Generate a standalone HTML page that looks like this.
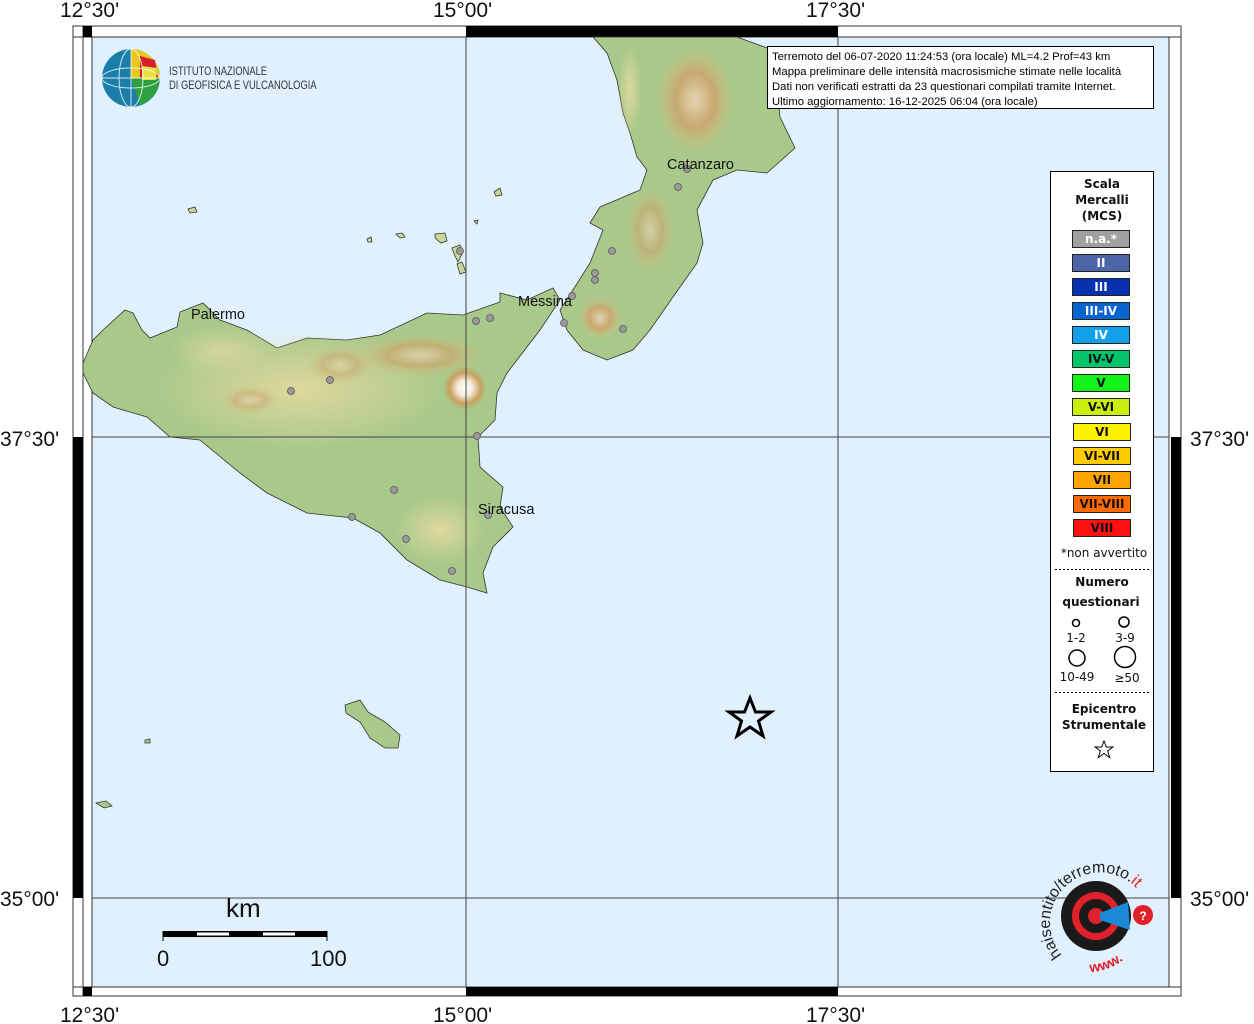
<!DOCTYPE html>
<html><head><meta charset="utf-8"><style>
body{margin:0;background:#fff;width:1254px;height:1024px;overflow:hidden;font-family:"Liberation Sans",sans-serif}
svg{position:absolute;left:0;top:0}
</style></head><body>
<svg width="1254" height="1024" viewBox="0 0 1254 1024" xmlns="http://www.w3.org/2000/svg">
<defs>
<radialGradient id="etna" cx="0.5" cy="0.5" r="0.5"><stop offset="0" stop-color="#fff"/><stop offset="0.35" stop-color="#f3ead8"/><stop offset="0.7" stop-color="#c9a060"/><stop offset="1" stop-color="#c9a060" stop-opacity="0"/></radialGradient>
<radialGradient id="mt" cx="0.5" cy="0.5" r="0.5"><stop offset="0" stop-color="#e8d6b8"/><stop offset="0.5" stop-color="#cba46a"/><stop offset="1" stop-color="#d8c488" stop-opacity="0"/></radialGradient>
<radialGradient id="tan" cx="0.5" cy="0.5" r="0.5"><stop offset="0" stop-color="#e5d9a0"/><stop offset="1" stop-color="#e5d9a0" stop-opacity="0"/></radialGradient>
</defs>
<rect x="73" y="26" width="1108" height="970" fill="#fff" stroke="#333" stroke-width="1"/>
<rect x="92" y="37" width="1077" height="950" fill="#e0f1fd"/>
<line x1="83" y1="26" x2="83" y2="996" stroke="#333"/>
<line x1="73" y1="987" x2="1181" y2="987" stroke="#333"/>
<line x1="73" y1="37" x2="1181" y2="37" stroke="#333"/>
<rect x="92" y="37" width="1077" height="950" fill="none" stroke="#333" stroke-width="1"/>
<rect x="466" y="26" width="372" height="11" fill="#000"/>
<rect x="466" y="987" width="372" height="9" fill="#000"/>
<rect x="83" y="26" width="9" height="11" fill="#000"/>
<rect x="83" y="987" width="9" height="9" fill="#000"/>
<rect x="73" y="437" width="10" height="461" fill="#000"/>
<rect x="1171" y="437" width="10" height="461" fill="#000"/>
<g stroke="#333" stroke-width="0.8">
<path fill="#a8c98a" d="M83,363 L93,340 L103,330 L125,310 L133,313 L142,330 L150,338 L177,327 L180,312 L203,303 L220,320 L247,330 L277,348 L307,338 L347,340 L380,335 L427,313 L463,315 L500,302 L500,293 L527,300 L553,288 L560,300 L540,330 L507,373 L497,393 L495,420 L478,437 L480,467 L503,487 L500,507 L513,527 L493,547 L483,573 L487,593 L467,587 L440,580 L407,560 L380,533 L353,518 L307,513 L267,493 L240,473 L200,440 L170,437 L147,417 L113,407 L93,393 L83,373 Z"/>
<path fill="#a8c98a" d="M593,37 L737,37 L773,50 L780,117 L795,148 L767,173 L737,170 L713,180 L697,210 L703,243 L697,263 L673,297 L650,330 L633,350 L607,360 L583,350 L567,330 L560,310 L573,290 L590,263 L603,230 L590,223 L600,207 L640,190 L647,170 L637,157 L630,133 L623,113 L617,80 L607,53 Z"/>
<path fill="#a8c98a" d="M345,705 L360,700 L368,712 L385,722 L400,735 L398,748 L385,748 L370,738 L360,722 L346,713 Z"/>
<path fill="#a8c98a" d="M96,803 L106,801 L112,806 L104,808 Z"/>
<path fill="#a8c98a" d="M145,740 L150,739 L150,743 L145,743 Z"/>
<path fill="#c9d79a" d="M435,234 L445,233 L447,241 L441,243 L435,238 Z"/>
<path fill="#c9d79a" d="M452,248 L460,245 L463,252 L458,262 L455,256 Z"/>
<path fill="#c9d79a" d="M457,264 L462,262 L466,272 L460,274 Z"/>
<path fill="#c9d79a" d="M396,234 L402,233 L405,237 L400,238 Z"/>
<path fill="#c9d79a" d="M367,239 L371,237 L372,242 L368,242 Z"/>
<path fill="#c9d79a" d="M474,221 L478,220 L477,224 Z"/>
<path fill="#c9d79a" d="M494,192 L500,188 L502,195 L496,196 Z"/>
<path fill="#c9d79a" d="M188,209 L195,207 L197,212 L190,213 Z"/>
</g>
<g>
<ellipse cx="300" cy="390" rx="150" ry="60" fill="url(#tan)" opacity="0.9"/>
<ellipse cx="220" cy="350" rx="50" ry="25" fill="url(#tan)" opacity="0.7"/>
<ellipse cx="420" cy="355" rx="65" ry="22" fill="url(#mt)" opacity="0.7"/>
<ellipse cx="340" cy="365" rx="35" ry="20" fill="url(#mt)" opacity="0.5"/>
<ellipse cx="250" cy="400" rx="30" ry="15" fill="url(#mt)" opacity="0.5"/>
<ellipse cx="440" cy="530" rx="45" ry="35" fill="url(#tan)" opacity="0.9"/>
<circle cx="465" cy="388" r="22" fill="url(#etna)"/>
<ellipse cx="695" cy="100" rx="40" ry="55" fill="url(#mt)" opacity="0.9"/>
<ellipse cx="650" cy="230" rx="25" ry="45" fill="url(#mt)" opacity="0.6"/>
<ellipse cx="600" cy="318" rx="22" ry="22" fill="url(#mt)" opacity="0.9"/>
<ellipse cx="630" cy="90" rx="12" ry="45" fill="url(#tan)" opacity="0.9"/>
</g>
<g stroke="#444" stroke-width="1">
<line x1="466" y1="37" x2="466" y2="987"/>
<line x1="838" y1="37" x2="838" y2="987"/>
<line x1="92" y1="437" x2="1169" y2="437"/>
<line x1="92" y1="898" x2="1169" y2="898"/>
</g>
<g fill="#9a9a9a" stroke="#555" stroke-width="0.8">
<circle cx="291" cy="391" r="3.5"/><circle cx="330" cy="380" r="3.5"/><circle cx="476" cy="321" r="3.5"/><circle cx="490" cy="318" r="3.5"/>
<circle cx="477" cy="436" r="3.5"/><circle cx="394" cy="490" r="3.5"/><circle cx="352" cy="517" r="3.5"/><circle cx="406" cy="539" r="3.5"/>
<circle cx="452" cy="571" r="3.5"/><circle cx="488" cy="515" r="3.5"/><circle cx="460" cy="251" r="3.5"/>
<circle cx="687" cy="169" r="3.5"/><circle cx="678" cy="187" r="3.5"/><circle cx="612" cy="251" r="3.5"/><circle cx="595" cy="273" r="3.5"/>
<circle cx="595" cy="280" r="3.5"/><circle cx="572" cy="296" r="3.5"/><circle cx="564" cy="323" r="3.5"/><circle cx="623" cy="329" r="3.5"/>
</g>
<g font-size="14.5" fill="#111">
<text x="191" y="319">Palermo</text>
<text x="518" y="306">Messina</text>
<text x="478" y="514">Siracusa</text>
<text x="667" y="169">Catanzaro</text>
</g>
<path d="M750,698 L755.5,712 L771,712 L758.5,721 L763,736 L750,727 L737,736 L741.5,721 L729,712 L744.5,712 Z" fill="none" stroke="#000" stroke-width="3"/>
<rect x="163" y="931" width="164" height="6" fill="#000"/>
<rect x="197" y="932.5" width="32" height="3" fill="#fff"/>
<rect x="263" y="932.5" width="32" height="3" fill="#fff"/>
<line x1="163" y1="931" x2="163" y2="941" stroke="#000"/>
<line x1="327" y1="931" x2="327" y2="941" stroke="#000"/>
<text x="226" y="917" font-size="26" fill="#111">km</text>
<text x="157" y="966" font-size="22" fill="#111">0</text>
<text x="310" y="966" font-size="22" fill="#111">100</text>
<g font-size="21" fill="#111">
<text x="60" y="17">12°30'</text><text x="433" y="17">15°00'</text><text x="806" y="17">17°30'</text>
<text x="60" y="1022">12°30'</text><text x="433" y="1022">15°00'</text><text x="806" y="1022">17°30'</text>
<text x="0" y="446">37°30'</text><text x="1190" y="446">37°30'</text>
<text x="0" y="906">35°00'</text><text x="1190" y="906">35°00'</text>
</g>
<g>
<circle cx="131" cy="78" r="29" fill="#1a7fa8"/>
<path d="M131,49 A29,29 0 0 1 160,78 L131,78 Z" fill="#e8c81a"/>
<path d="M140,56 L155,60 L158,78 L140,78 Z" fill="#d8202a"/>
<path d="M131,78 L160,78 A29,29 0 0 1 140,105 Z" fill="#2fa040"/>
<path d="M142,66 L157,68 L156,80 L142,80 Z" fill="#e8e040"/>
<g stroke="#fff" stroke-width="1" fill="none" opacity="0.8">
<ellipse cx="131" cy="78" rx="12" ry="29"/><ellipse cx="131" cy="78" rx="29" ry="10"/><line x1="102" y1="78" x2="160" y2="78"/><line x1="131" y1="49" x2="131" y2="107"/>
</g>
<g transform="translate(169,0) scale(0.78,1)" font-size="12" fill="#333">
<text x="0" y="75">ISTITUTO NAZIONALE</text>
<text x="0" y="89">DI GEOFISICA E VULCANOLOGIA</text>
</g>
</g>
<rect x="767.5" y="46.5" width="386" height="62" fill="#fff" stroke="#000"/>
<g font-size="11.3" fill="#000">
<text x="772" y="60">Terremoto del 06-07-2020 11:24:53 (ora locale) ML=4.2 Prof=43 km</text>
<text x="772" y="75">Mappa preliminare delle intensità macrosismiche stimate nelle località</text>
<text x="772" y="90">Dati non verificati estratti da 23 questionari compilati tramite Internet.</text>
<text x="772" y="105">Ultimo aggiornamento: 16-12-2025 06:04 (ora locale)</text>
</g>
<rect x="1050.5" y="171.5" width="103" height="600" fill="#fff" stroke="#000"/>
<g font-family="DejaVu Sans, sans-serif" font-weight="bold" font-size="12" text-anchor="middle" fill="#111">
<text x="1102" y="188">Scala</text><text x="1102" y="204">Mercalli</text><text x="1102" y="220">(MCS)</text>
</g>
<g stroke="#222" stroke-width="1">
<rect x="1072.5" y="230.5" width="57" height="17" fill="#a0a0a0"/>
<rect x="1072.5" y="254.5" width="57" height="17" fill="#4e66a8"/>
<rect x="1072.5" y="278.5" width="57" height="17" fill="#0630b0"/>
<rect x="1072.5" y="302.5" width="57" height="17" fill="#0a64d0"/>
<rect x="1072.5" y="326.5" width="57" height="17" fill="#12a0ea"/>
<rect x="1072.5" y="350.5" width="57" height="17" fill="#00c46a"/>
<rect x="1072.5" y="374.5" width="57" height="17" fill="#12f41a"/>
<rect x="1072.5" y="398.5" width="57" height="17" fill="#c8f00a"/>
<rect x="1073.5" y="423.5" width="57" height="17" fill="#fff400"/>
<rect x="1073.5" y="447.5" width="57" height="17" fill="#ffcc00"/>
<rect x="1073.5" y="471.5" width="57" height="17" fill="#ffa400"/>
<rect x="1073.5" y="495.5" width="57" height="17" fill="#ff6a00"/>
<rect x="1073.5" y="519.5" width="57" height="17" fill="#ff1010"/>
</g>
<g font-family="DejaVu Sans, sans-serif" font-weight="bold" font-size="12" text-anchor="middle">
<text x="1101" y="243" fill="#fff">n.a.*</text>
<text x="1101" y="267" fill="#fff">II</text>
<text x="1101" y="291" fill="#fff">III</text>
<text x="1101" y="315" fill="#fff">III-IV</text>
<text x="1101" y="339" fill="#fff">IV</text>
<text x="1101" y="363" fill="#111">IV-V</text>
<text x="1101" y="387" fill="#111">V</text>
<text x="1101" y="411" fill="#111">V-VI</text>
<text x="1102" y="436" fill="#111">VI</text>
<text x="1102" y="460" fill="#111">VI-VII</text>
<text x="1102" y="484" fill="#111">VII</text>
<text x="1102" y="508" fill="#111">VII-VIII</text>
<text x="1102" y="532" fill="#111">VIII</text>
</g>
<g font-family="DejaVu Sans, sans-serif" font-size="12" text-anchor="middle" fill="#111">
<text x="1104" y="557">*non avvertito</text>
<text x="1102" y="586" font-weight="bold">Numero</text>
<text x="1101" y="606" font-weight="bold">questionari</text>
<text x="1076" y="642">1-2</text><text x="1125" y="642">3-9</text>
<text x="1077" y="681">10-49</text><text x="1127" y="682">≥50</text>
<text x="1104" y="713" font-weight="bold">Epicentro</text>
<text x="1104" y="729" font-weight="bold">Strumentale</text>
</g>
<line x1="1055" y1="569.5" x2="1150" y2="569.5" stroke="#000" stroke-dasharray="2,2"/>
<line x1="1055" y1="692.5" x2="1150" y2="692.5" stroke="#000" stroke-dasharray="2,2"/>
<g fill="none" stroke="#000" stroke-width="1.5">
<circle cx="1076" cy="623" r="3.5"/><circle cx="1124" cy="622" r="5"/>
<circle cx="1077" cy="658" r="8"/><circle cx="1125" cy="657" r="10.5"/>
<path d="M1104,741 L1106.3,747 L1113,747 L1107.7,751 L1109.7,757.5 L1104,753.5 L1098.3,757.5 L1100.3,751 L1095,747 L1101.7,747 Z" stroke-width="1"/>
</g>
<g>
<circle cx="1096" cy="916" r="35" fill="#1a1a1a"/>
<circle cx="1096" cy="916" r="24" fill="#e0202a"/>
<circle cx="1096" cy="916" r="17" fill="#1a1a1a"/>
<circle cx="1096" cy="916" r="8" fill="#e0202a"/>
<path d="M1100,913 L1128,902 L1130,930 L1100,920 Z" fill="#1a8ad8"/>
<circle cx="1143" cy="915" r="10" fill="#e0202a"/>
<text x="1143" y="920" font-size="12" font-weight="bold" fill="#fff" text-anchor="middle">?</text>
<path id="arc" d="M1062,955 A46,46 0 1 1 1138,890" fill="none"/>
<text font-size="16" fill="#222"><textPath href="#arc">haisentito/terremoto.<tspan fill="#e0202a">it</tspan></textPath></text>
<path id="arc2" d="M1090,972 A56,56 0 0 0 1140,938" fill="none"/>
<text font-size="14" fill="#e0202a" font-weight="bold"><textPath href="#arc2">www.</textPath></text>
</g>
</svg>
</body></html>
